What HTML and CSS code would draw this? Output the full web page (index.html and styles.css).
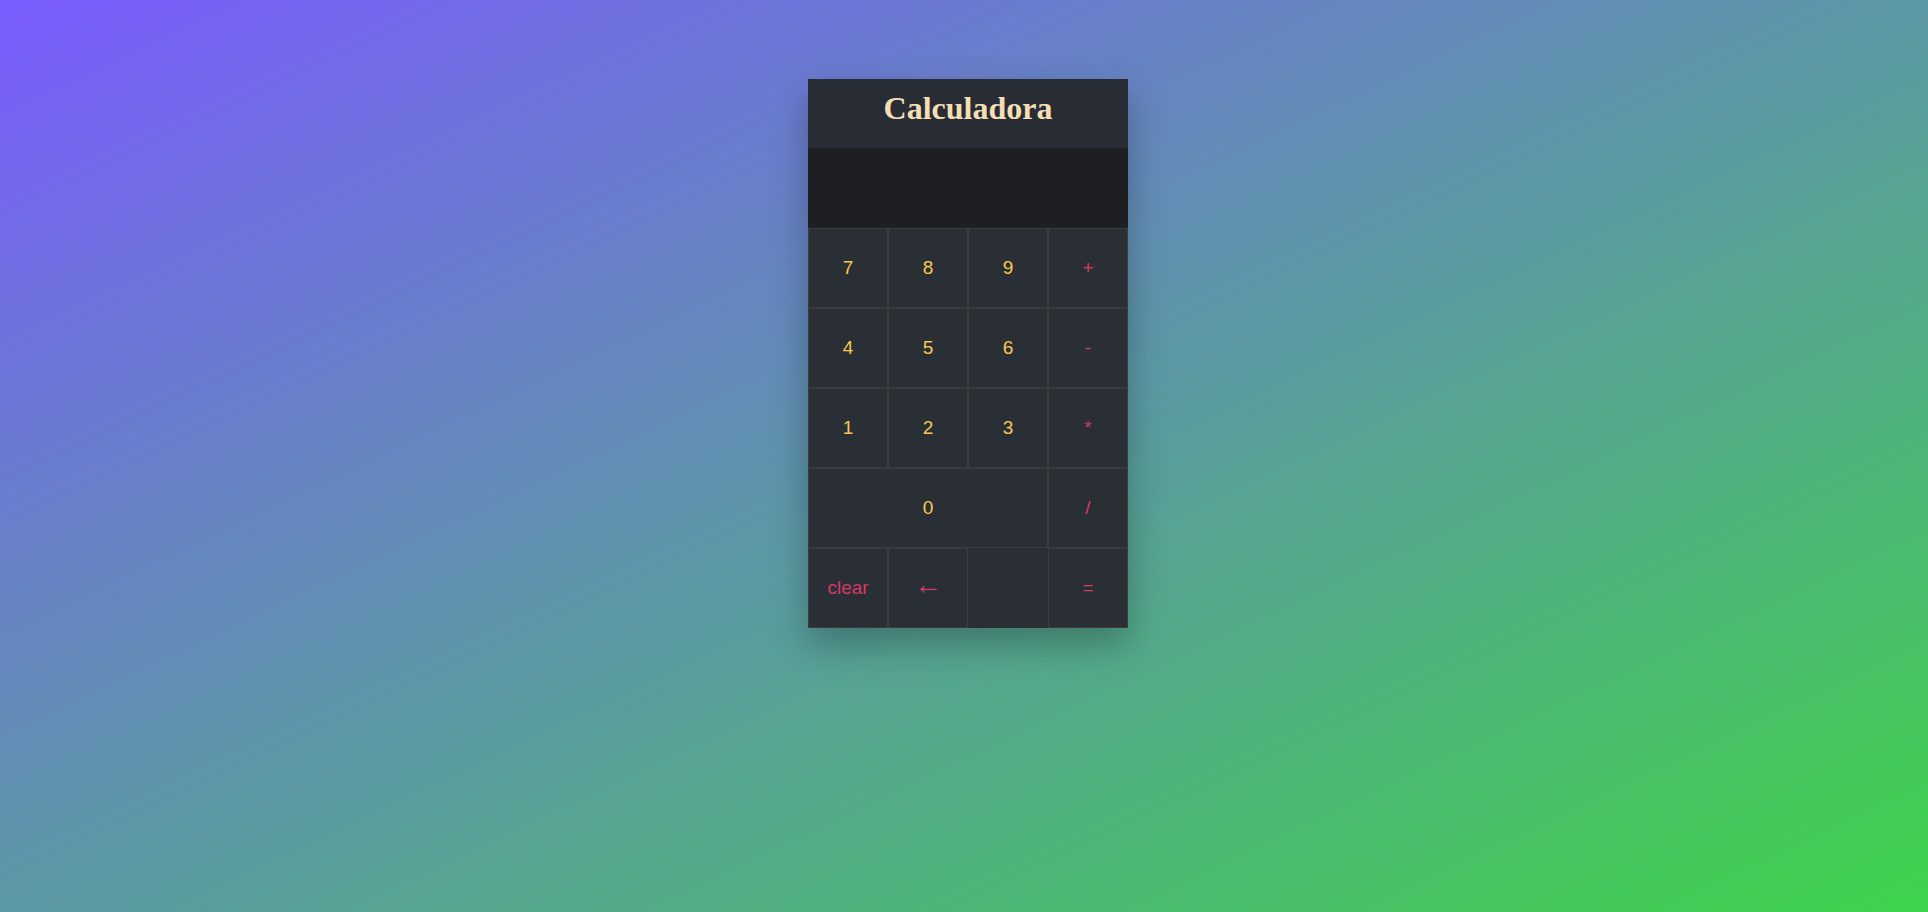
FILE: index.html
```html
<!DOCTYPE html>
<html lang="es">
<head>
<meta charset="utf-8">
<title>Calculadora</title>
<link rel="stylesheet" href="styles.css">
</head>
<body>
<main class="page">
  <section class="calc">
    <header class="calc-header"><h1 class="calc-title">Calculadora</h1></header>
    <div class="display"></div>
    <div class="keys">
      <button class="key num">7</button>
      <button class="key num">8</button>
      <button class="key num">9</button>
      <button class="key op">+</button>
      <button class="key num">4</button>
      <button class="key num">5</button>
      <button class="key num">6</button>
      <button class="key op">-</button>
      <button class="key num">1</button>
      <button class="key num">2</button>
      <button class="key num">3</button>
      <button class="key op">*</button>
      <button class="key num wide">0</button>
      <button class="key op">/</button>
      <button class="key op">clear</button>
      <button class="key op arrow">&larr;</button>
      <div class="key blank"></div>
      <button class="key op">=</button>
    </div>
  </section>
</main>
</body>
</html>
```
FILE: styles.css
```css
html, body {
  margin: 0;
  padding: 0;
  height: 100%;
}
body {
  background: linear-gradient(to bottom right, #7a5cff 0%, #3ed34a 100%);
  font-family: "Liberation Sans", Arial, sans-serif;
  overflow: hidden;
}
.page {
  display: flex;
  justify-content: center;
  padding: 79px 0 0 8px;
}
.calc {
  width: 320px;
  background: #282c34;
  box-shadow: 0 16px 34px rgba(0, 0, 0, 0.27);
}
.calc-header {
  box-sizing: border-box;
  height: 69px;
  padding-top: 13px;
  display: flex;
  justify-content: center;
  align-items: flex-start;
  background: #282c34;
}
.calc-title {
  margin: 0;
  font-family: "Liberation Serif", "Times New Roman", serif;
  font-weight: bold;
  font-size: 32px;
  color: #f5deb3;
  line-height: 1;
}
.display {
  height: 80px;
  background: #1e1f22;
}
.keys {
  display: grid;
  grid-template-columns: repeat(4, 80px);
  grid-auto-rows: 80px;
}
.key {
  box-sizing: border-box;
  margin: 0;
  padding: 0;
  background: #2a2e35;
  border: 1px solid #3b3c3e;
  font-family: "Liberation Sans", Arial, sans-serif;
  font-size: 19px;
  display: flex;
  align-items: center;
  justify-content: center;
}
.num {
  color: #f9c84e;
}
.op {
  color: #d53a68;
}
.wide {
  grid-column: span 3;
}
.arrow {
  font-size: 28px;
  padding-bottom: 6px;
}
.blank {
  border: none;
}
```
